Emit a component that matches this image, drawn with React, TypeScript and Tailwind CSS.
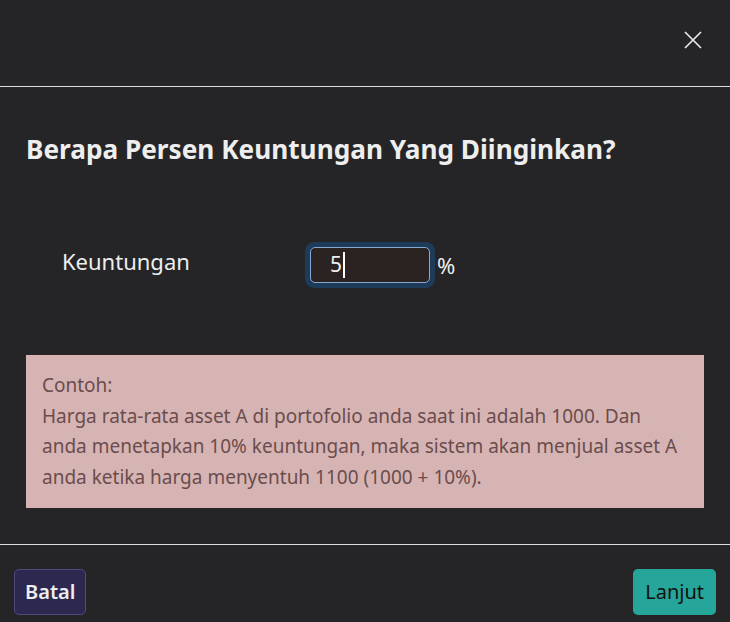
export default function App() {
  return (
    <div
      className="w-[730px] h-[622px] bg-[#252527] text-[#eeeeee] flex flex-col overflow-hidden"
      style={{ fontFamily: '"Segoe UI", "Noto Sans", "Open Sans", sans-serif' }}
    >
      {/* header */}
      <div className="h-[87px] border-b border-[#dddddd] flex items-start justify-end pr-[26px] pt-[29px]">
        <svg width="22" height="22" viewBox="0 0 22 22" className="text-[#eeeeee]">
          <path d="M3 3 L19 19 M19 3 L3 19" stroke="currentColor" strokeWidth="1.6" />
        </svg>
      </div>

      {/* body */}
      <div className="flex-1 border-b border-[#dddddd] px-[26px]">
        <h2 className="mt-[44px] text-[26.2px] font-bold leading-[36px] text-[#eeeeee]">
          Berapa Persen Keuntungan Yang Diinginkan?
        </h2>

        <div className="mt-[75px] flex items-center">
          <div className="w-[279px] pl-[36px] text-[22px] leading-[30px] -mt-[8px]">Keuntungan</div>
          <div className="rounded-[9px] bg-[#1f3b5a] p-[5px]">
            <div className="w-[120px] h-[36px] rounded-[5px] border border-[#86a9d6] bg-[#2b2222] flex items-center pl-[19px] text-[21px]">
              5<span className="inline-block w-[2px] h-[26px] bg-white ml-[1px]" />
            </div>
          </div>
          <span className="ml-[2px] text-[22px]">%</span>
        </div>

        <div className="mt-[67px] bg-[#d6b4b4] px-[16px] pt-[15px] pb-[15px] text-[#6b4c4c] text-[19px] leading-[30.7px]">
          <p>Contoh:</p>
          <p>
            Harga rata-rata asset A di portofolio anda saat ini adalah 1000. Dan
            <br />
            anda menetapkan 10% keuntungan, maka sistem akan menjual asset A
            <br />
            anda ketika harga menyentuh 1100 (1000 + 10%).
          </p>
        </div>
      </div>

      {/* footer */}
      <div className="h-[77px] flex items-start justify-between px-[14px] pt-[24px]">
        <button className="h-[46px] px-[10px] rounded-[5px] border border-[#514882] bg-[#2d2850] text-[20px] font-semibold text-[#eeeeee]">
          Batal
        </button>
        <button className="h-[46px] px-[12px] rounded-[5px] bg-[#26a69a] text-[20px] text-[#111111]">
          Lanjut
        </button>
      </div>
    </div>
  );
}
